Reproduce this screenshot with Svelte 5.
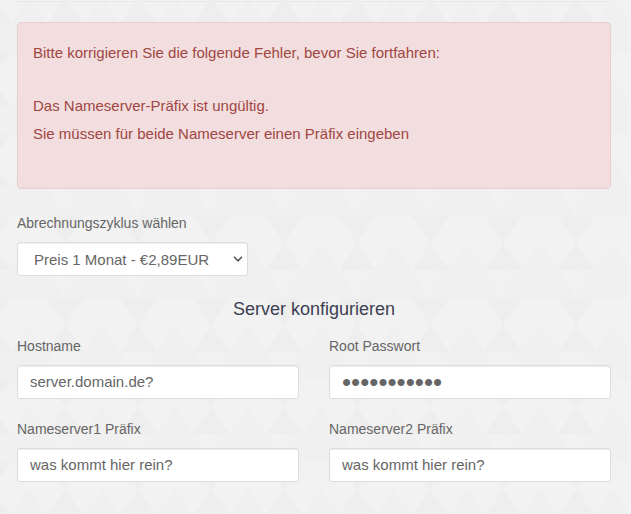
<script lang="ts">
  interface Field {
    id: string;
    label: string;
    type: 'text' | 'password';
    value: string;
  }

  const errors = [
    'Das Nameserver-Präfix ist ungültig.',
    'Sie müssen für beide Nameserver einen Präfix eingeben',
  ];

  let cycle = $state('monthly');

  let fields: Field[] = $state([
    { id: 'hostname', label: 'Hostname', type: 'text', value: 'server.domain.de?' },
    { id: 'rootpw', label: 'Root Passwort', type: 'password', value: 'geheim12345' },
    { id: 'ns1prefix', label: 'Nameserver1 Präfix', type: 'text', value: 'was kommt hier rein?' },
    { id: 'ns2prefix', label: 'Nameserver2 Präfix', type: 'text', value: 'was kommt hier rein?' },
  ]);
</script>

<form class="configure">
  <hr />

  <div class="alert" role="alert">
    <p>Bitte korrigieren Sie die folgende Fehler, bevor Sie fortfahren:</p>
    <ul>
      {#each errors as error}
        <li>{error}</li>
      {/each}
    </ul>
  </div>

  <div class="field cycle">
    <label for="billingcycle">Abrechnungszyklus wählen</label>
    <select id="billingcycle" bind:value={cycle}>
      <option value="monthly">Preis 1 Monat - €2,89EUR</option>
    </select>
  </div>

  <h4>Server konfigurieren</h4>

  <div class="fields">
    {#each fields as field}
      <div class="field">
        <label for={field.id}>{field.label}</label>
        <input id={field.id} type={field.type} bind:value={field.value} autocomplete="off" />
      </div>
    {/each}
  </div>
</form>

<style>
  :global(body) {
    margin: 0;
    background-color: #f1f1f1;
    /* triangle pattern */
    background-image: url("data:image/svg+xml,%3Csvg xmlns='http://www.w3.org/2000/svg' width='73' height='82'%3E%3Cpath fill='%23f2f2f2' d='M0 0h18l18 27-18 27H0zM73 0H54L36 27l18 27h19z'/%3E%3Cpath fill='%23eee' d='M18 0h37L36 27zM36 27l19 27H18z'/%3E%3Cpath fill='%23f0f0f0' d='M0 27l18 27H0zM73 27L55 54h18zM0 82V54h18zM73 82V54H55z'/%3E%3Cpath fill='%23f2f2f2' d='M20 54h16v28z'/%3E%3Cpath fill='%23f0f0f0' d='M18 54l18 28H0zM55 54l18 28H36z'/%3E%3C/svg%3E");
    background-position: 29px 52px;
  }

  .configure {
    padding: 1px 20px 32px 17px;
    color: #666;
    font-family: Arial, "Liberation Sans", sans-serif;
    font-size: 15px;
    line-height: 28px;
  }

  hr {
    margin: 0 0 20px;
    border: 0;
    border-top: 1px solid #e9e9e9;
  }

  .alert {
    padding: 16px 15px 40px;
    border: 1px solid #ebccd1;
    border-radius: 4px;
    background: #f2dede;
    color: #a04644;
  }

  .alert p {
    margin: 0 0 25px;
  }

  .alert ul {
    margin: 0;
    padding: 0;
    list-style: none;
  }

  .field {
    display: flex;
    flex-direction: column;
    align-items: flex-start;
    gap: 5px;
  }

  .cycle {
    margin-top: 20px;
  }

  label {
    font-size: 14px;
  }

  input,
  select {
    box-sizing: border-box;
    height: 34px;
    margin: 0;
    padding: 0 12px 2px;
    border: 1px solid #ddd;
    border-radius: 3px;
    background-color: #fff;
    box-shadow: inset 0 1px 1px rgba(0, 0, 0, 0.07);
    color: #666;
    font-family: inherit;
    font-size: 15px;
  }

  input {
    width: 100%;
  }

  /* larger masking dots */
  input[type='password'] {
    padding-bottom: 0;
    font-size: 26px;
  }

  select {
    padding: 0 37px 0 16px;
    appearance: none;
    background-image: url("data:image/svg+xml,%3Csvg xmlns='http://www.w3.org/2000/svg' width='10' height='6'%3E%3Cpath fill='none' stroke='%23555' stroke-width='1.6' d='M1 .8l4 4 4-4'/%3E%3C/svg%3E");
    background-repeat: no-repeat;
    background-position: right 4px center;
  }

  h4 {
    margin: 23px 0 13px;
    color: #3c4052;
    font-size: 18px;
    font-weight: 400;
    line-height: 20px;
    text-align: center;
  }

  .fields {
    display: grid;
    grid-template-columns: 1fr 1fr;
    gap: 16px 30px;
  }
</style>
